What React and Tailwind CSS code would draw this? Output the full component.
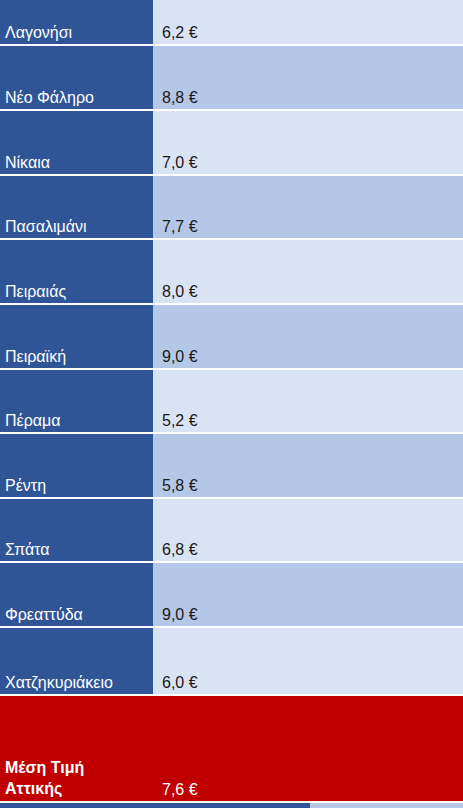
const rows = [
  { name: 'Λαγονήσι', price: '6,2 €', h: 'h-[46px]', alt: false },
  { name: 'Νέο Φάληρο', price: '8,8 €', h: 'h-[65px]', alt: true },
  { name: 'Νίκαια', price: '7,0 €', h: 'h-[65px]', alt: false },
  { name: 'Πασαλιμάνι', price: '7,7 €', h: 'h-[64px]', alt: true },
  { name: 'Πειραιάς', price: '8,0 €', h: 'h-[65px]', alt: false },
  { name: 'Πειραϊκή', price: '9,0 €', h: 'h-[65px]', alt: true },
  { name: 'Πέραμα', price: '5,2 €', h: 'h-[64px]', alt: false },
  { name: 'Ρέντη', price: '5,8 €', h: 'h-[65px]', alt: true },
  { name: 'Σπάτα', price: '6,8 €', h: 'h-[64px]', alt: false },
  { name: 'Φρεαττύδα', price: '9,0 €', h: 'h-[65px]', alt: true },
  { name: 'Χατζηκυριάκειο', price: '6,0 €', h: 'h-[68px]', alt: false },
];

export default function App() {
  return (
    <div className="w-[463px] h-[808px] overflow-hidden bg-white font-['Liberation_Sans',Arial,sans-serif] text-[16px] leading-[18px]">
      {/* γραμμές πίνακα */}
      {rows.map((r) => (
        <div key={r.name} className={`flex ${r.h} border-b-2 border-white`}>
          <div className="w-[153px] bg-[#2f5597] text-white flex items-end pl-[5px] pb-[2px]">
            {r.name}
          </div>
          <div
            className={`flex-1 flex items-end pl-[9px] pb-[2px] text-[#1a1a1a] ${
              r.alt ? 'bg-[#b4c7e7]' : 'bg-[#dae3f3]'
            }`}
          >
            {r.price}
          </div>
        </div>
      ))}

      {/* μέση τιμή */}
      <div className="flex h-[107px] bg-[#c00000] text-white border-b-2 border-white">
        <div className="w-[153px] flex items-end pl-[5px] pb-[2px] font-bold leading-[21px]">
          Μέση Τιμή<br />Αττικής
        </div>
        <div className="flex-1 flex items-end pl-[9px] pb-[2px]">7,6 €</div>
      </div>

      {/* επόμενη γραμμή */}
      <div className="flex h-[10px]">
        <div className="w-[310px] bg-[#2f5597]" />
        <div className="flex-1 bg-[#b4c7e7]" />
      </div>
    </div>
  );
}
